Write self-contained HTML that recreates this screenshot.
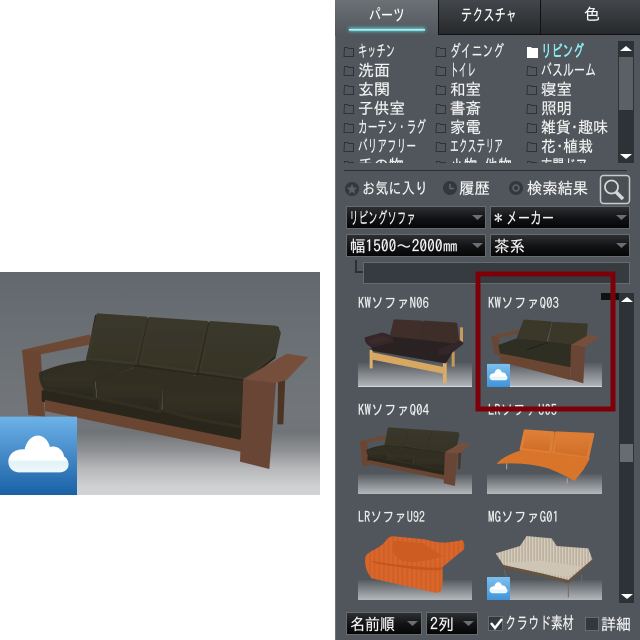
<!DOCTYPE html>
<html><head><meta charset="utf-8"><style>
html,body{margin:0;padding:0;background:#fff;width:640px;height:640px;overflow:hidden}
svg{display:block}
text{font-family:"IPAGothic","Liberation Sans","Noto Sans CJK JP",sans-serif;fill:#f4f4f4;font-size:16px;stroke:#f4f4f4;stroke-width:.15px}
.s{font-size:17px}
.d{fill:#fff;font-size:17px}
.l{font-size:15px;fill:#eee}
</style></head><body>
<svg width="640" height="640" viewBox="0 0 640 640" xmlns="http://www.w3.org/2000/svg">
<defs>
<linearGradient id="bg" x1="0" y1="0" x2="0" y2="1">
<stop offset="0" stop-color="#62686e"/><stop offset=".3" stop-color="#6b7075"/><stop offset=".62" stop-color="#72767a"/><stop offset=".72" stop-color="#717477"/><stop offset=".8" stop-color="#8e9093"/><stop offset=".88" stop-color="#b5b7b9"/><stop offset=".96" stop-color="#cfd0d2"/><stop offset="1" stop-color="#d2d3d5"/>
</linearGradient>
<linearGradient id="sel" x1="0" y1="0" x2="0" y2="1"><stop offset="0" stop-color="#2e3134"/><stop offset=".5" stop-color="#131416"/><stop offset="1" stop-color="#050506"/></linearGradient>
<linearGradient id="tabA" x1="0" y1="0" x2="0" y2="1"><stop offset="0" stop-color="#6c7176"/><stop offset="1" stop-color="#50565b"/></linearGradient>
<linearGradient id="tabB" x1="0" y1="0" x2="0" y2="1"><stop offset="0" stop-color="#43474b"/><stop offset="1" stop-color="#26282b"/></linearGradient>
<linearGradient id="plate" x1="0" y1="0" x2="0" y2="1"><stop offset="0" stop-color="#565b60"/><stop offset="1" stop-color="#b5b8bb"/></linearGradient>
<linearGradient id="badge" x1="0" y1="0" x2="0" y2="1"><stop offset="0" stop-color="#6db2e8"/><stop offset="1" stop-color="#1a60a6"/></linearGradient>
<linearGradient id="badge2" x1="0" y1="0" x2="0" y2="1"><stop offset="0" stop-color="#7cc0ee"/><stop offset="1" stop-color="#3f94dc"/></linearGradient>
<linearGradient id="cloud" x1="0" y1="0" x2="0" y2="1"><stop offset="0" stop-color="#fff"/><stop offset=".65" stop-color="#fff"/><stop offset=".72" stop-color="#dff3f7"/><stop offset="1" stop-color="#f0f9fb"/></linearGradient>
<linearGradient id="seatG" x1="0" y1="0" x2="0" y2="1"><stop offset="0" stop-color="#302e22"/><stop offset=".5" stop-color="#333024"/><stop offset="1" stop-color="#29271c"/></linearGradient>
<linearGradient id="backG" x1="0" y1="0" x2="0" y2="1"><stop offset="0" stop-color="#3a382c"/><stop offset="1" stop-color="#363326"/></linearGradient>
<linearGradient id="orG" x1="0" y1="0" x2="0" y2="1"><stop offset="0" stop-color="#e08036"/><stop offset="1" stop-color="#cf6c28"/></linearGradient>
<pattern id="wick" width="9" height="9" patternUnits="userSpaceOnUse"><rect width="9" height="9" fill="#bdb2a1"/><rect width="4" height="9" fill="#d6ccbc"/></pattern>
<pattern id="rib" width="14" height="14" patternUnits="userSpaceOnUse"><rect width="14" height="14" fill="#d9662c"/><rect width="5" height="14" fill="#cf5e25"/></pattern>
<filter id="glow" x="-30%" y="-300%" width="160%" height="700%"><feGaussianBlur stdDeviation="1.5"/></filter>
<filter id="soft"><feGaussianBlur stdDeviation=".4"/></filter>
<clipPath id="listclip"><rect x="340" y="40" width="278" height="123"/></clipPath>
<path id="cl" d="M55,622C28,620 18,592 30,572C38,558 56,552 74,553C80,526 98,510 116,512C136,514 146,532 150,546C170,540 190,555 192,574C212,586 212,620 180,622Z" fill="url(#cloud)"/>
<path id="fld" d="M.5,.5h3l1,1h5v8h-9.500z" fill="#52575b" stroke="#2f3337"/>
<g id="sofa">
<path d="M835,300L858,290L850,478L832,478Z" fill="#4d3427"/>
<path d="M66,255L270,208L274,238L122,268Z" fill="#6d4934"/>
<path d="M66,255L122,262L135,455L85,450Z" fill="#6a4532"/>
<path d="M285,150L835,185L842,205L826,280L735,350L258,290Z" fill="#2a281d"/>
<g stroke-linejoin="round" stroke-width="8">
<path d="M293,149L439,159L408,296L262,281Z" fill="url(#backG)" stroke="#3a382b"/>
<path d="M449,160L621,172L587,320L420,296Z" fill="url(#backG)" stroke="#3a382b"/>
<path d="M632,172L826,186L838,202L822,270L735,340L600,320Z" fill="url(#backG)" stroke="#3a382b"/>
</g>
<path d="M125,375L125,410L720,530L735,480L300,400Z" fill="#2a281d"/>
<path d="M135,405L725,525L722,560L135,438Z" fill="#694432"/>
<g stroke-linejoin="round" stroke-width="10">
<path d="M122,326Q180,300 260,291L395,305L280,347L285,402L135,372Q122,350 122,326Z" fill="url(#seatG)" stroke="#2f2d21"/>
<path d="M292,352L410,311L578,332L482,370L480,440L296,400Z" fill="url(#seatG)" stroke="#312f22"/>
<path d="M492,374L595,334L725,352L725,486L580,460L492,436Z" fill="url(#seatG)" stroke="#302e21"/>
</g>
<path d="M730,342L860,266L925,276L860,345L825,354Z" fill="#74503b"/>
<path d="M730,342L828,354L808,612L720,590Z" fill="#694534"/>
</g>
</defs>

<!-- left preview -->
<rect x="0" y="272" width="320" height="223" fill="url(#bg)"/>
<g transform="translate(0,265) scale(.33333)" filter="url(#soft)"><use href="#sofa"/>
<rect x="0" y="455" width="231" height="235" fill="url(#badge)"/><use href="#cl"/></g>

<!-- panel -->
<rect x="335" y="0" width="305" height="640" fill="#50565b"/>
<rect x="335" y="0" width="1" height="640" fill="#6d7277"/>
<rect x="438" y="0" width="102" height="35" fill="url(#tabB)"/>
<rect x="540" y="0" width="100" height="35" fill="url(#tabB)"/>
<rect x="438" y="0" width="1" height="35" fill="#111"/><rect x="540" y="0" width="1" height="35" fill="#111"/>
<rect x="438" y="34" width="202" height="1" fill="#101113"/>
<rect x="335" y="0" width="103" height="36" fill="url(#tabA)"/>
<rect x="349" y="28" width="76" height="3" fill="#5fe3ee" filter="url(#glow)"/>
<rect x="349" y="29" width="76" height="1.6" fill="#aef2f6"/>
<text x="369" y="21" class="d" textLength="36" lengthAdjust="spacingAndGlyphs">パーツ</text>
<text x="461" y="21" class="d" textLength="56" lengthAdjust="spacingAndGlyphs">テクスチャ</text>
<text x="584" y="20" class="d" style="font-size:16px">色</text>

<!-- list -->
<g clip-path="url(#listclip)">
<use href="#fld" x="344" y="47"/><use href="#fld" x="344" y="66"/><use href="#fld" x="344" y="85"/><use href="#fld" x="344" y="104"/><use href="#fld" x="344" y="123"/><use href="#fld" x="344" y="142"/><use href="#fld" x="344" y="161"/>
<use href="#fld" x="436" y="47"/><use href="#fld" x="436" y="66"/><use href="#fld" x="436" y="85"/><use href="#fld" x="436" y="104"/><use href="#fld" x="436" y="123"/><use href="#fld" x="436" y="142"/><use href="#fld" x="436" y="161"/>
<use href="#fld" x="527" y="66"/><use href="#fld" x="527" y="85"/><use href="#fld" x="527" y="104"/><use href="#fld" x="527" y="123"/><use href="#fld" x="527" y="142"/><use href="#fld" x="527" y="161"/>
<path d="M527,47h4l1,1h6v10h-11z" fill="#fff"/>
<text x="358" y="57" class="s" textLength="37" lengthAdjust="spacingAndGlyphs">キッチン</text>
<text x="358" y="76" textLength="32" lengthAdjust="spacingAndGlyphs">洗面</text>
<text x="358" y="95" textLength="32" lengthAdjust="spacingAndGlyphs">玄関</text>
<text x="358" y="114" textLength="47" lengthAdjust="spacingAndGlyphs">子供室</text>
<text x="358" y="133" class="s" textLength="68" lengthAdjust="spacingAndGlyphs">カーテン・ラグ</text>
<text x="358" y="152" class="s" textLength="58" lengthAdjust="spacingAndGlyphs">バリアフリー</text>
<text x="358" y="171" textLength="46" lengthAdjust="spacingAndGlyphs">手の物</text>
<text x="450" y="57" class="s" textLength="54" lengthAdjust="spacingAndGlyphs">ダイニング</text>
<text x="450" y="76" class="s" textLength="26" lengthAdjust="spacingAndGlyphs">トイレ</text>
<text x="450" y="95" textLength="31" lengthAdjust="spacingAndGlyphs">和室</text>
<text x="450" y="114" textLength="31" lengthAdjust="spacingAndGlyphs">書斎</text>
<text x="450" y="133" textLength="31" lengthAdjust="spacingAndGlyphs">家電</text>
<text x="450" y="152" class="s" textLength="53" lengthAdjust="spacingAndGlyphs">エクステリア</text>
<text x="450" y="171" textLength="62" lengthAdjust="spacingAndGlyphs">小物･他物</text>
<text x="541" y="57" class="s" style="fill:#8feef5;stroke:#8feef5;stroke-width:.5px" textLength="43" lengthAdjust="spacingAndGlyphs">リビング</text>
<text x="541" y="76" class="s" textLength="55" lengthAdjust="spacingAndGlyphs">バスルーム</text>
<text x="541" y="95" textLength="31" lengthAdjust="spacingAndGlyphs">寝室</text>
<text x="541" y="114" textLength="31" lengthAdjust="spacingAndGlyphs">照明</text>
<text x="541" y="133" textLength="67" lengthAdjust="spacingAndGlyphs">雑貨･趣味</text>
<text x="541" y="152" textLength="52" lengthAdjust="spacingAndGlyphs">花･植栽</text>
<text x="541" y="171" textLength="46" lengthAdjust="spacingAndGlyphs">玄関ドア</text>
</g>
<!-- list scrollbar -->
<rect x="618" y="41" width="16" height="122" fill="#2d3237"/>
<rect x="619" y="57" width="14" height="53" fill="#5b6065"/>
<path d="M620,51L626,46L632,51Z" fill="#fff"/><path d="M620,154L632,154L626,159Z" fill="#fff"/>

<rect x="344" y="170" width="283" height="1" fill="#2b2f33"/>

<!-- filters -->
<circle cx="352" cy="189" r="7" fill="#33383d"/><path d="M352,184l1.5,3.4 3.6,.4-2.7,2.4 .8,3.6-3.2,-1.9-3.2,1.9 .8,-3.6-2.7,-2.4 3.6,-.4z" fill="#5a6065"/>
<circle cx="450" cy="188" r="7" fill="#33383d"/><path d="M450,184v4.500h4" stroke="#60666b" stroke-width="1.500" fill="none"/>
<circle cx="516" cy="188" r="7" fill="#33383d"/><circle cx="516" cy="188" r="3" fill="none" stroke="#60666b" stroke-width="1.500"/>
<text x="362" y="194" textLength="66" lengthAdjust="spacingAndGlyphs">お気に入り</text>
<text x="459" y="194" textLength="31" lengthAdjust="spacingAndGlyphs">履歴</text>
<text x="527" y="194" textLength="61" lengthAdjust="spacingAndGlyphs">検索結果</text>
<rect x="600.500" y="175.500" width="29" height="28" rx="3" fill="#4a4f54" stroke="#c8cbcd" stroke-width="1.500"/>
<circle cx="611.500" cy="187" r="6.500" fill="none" stroke="#d4d6d8" stroke-width="1.800"/>
<path d="M616,192L623,199" stroke="#d4d6d8" stroke-width="3.500"/>

<!-- selects -->
<g stroke="#666b70" stroke-width="1">
<rect x="346.500" y="206.500" width="139" height="22" fill="url(#sel)"/>
<rect x="490.500" y="206.500" width="139" height="22" fill="url(#sel)"/>
<rect x="346.500" y="234.500" width="139" height="22" fill="url(#sel)"/>
<rect x="490.500" y="234.500" width="139" height="22" fill="url(#sel)"/>
<rect x="346.500" y="612.500" width="75" height="22" fill="url(#sel)"/>
<rect x="426.500" y="612.500" width="51" height="22" fill="url(#sel)"/>
</g>
<g fill="#6a6f74">
<path d="M472,215h11l-5.500,5z"/><path d="M616,215h11l-5.500,5z"/><path d="M472,243h11l-5.500,5z"/><path d="M616,243h11l-5.500,5z"/><path d="M407,621h11l-5.500,5z"/><path d="M463,621h11l-5.500,5z"/>
</g>
<text x="349" y="224" class="s" textLength="67" lengthAdjust="spacingAndGlyphs">リビングソファ</text>
<text x="494" y="224" class="s">*</text>
<text x="506" y="224" class="s" textLength="48" lengthAdjust="spacingAndGlyphs">メーカー</text>
<text x="350" y="252" textLength="108" lengthAdjust="spacingAndGlyphs">幅1500～2000㎜</text>
<text x="494" y="252" textLength="31" lengthAdjust="spacingAndGlyphs">茶系</text>
<text x="350" y="630" textLength="45" lengthAdjust="spacingAndGlyphs">名前順</text>
<text x="430" y="630" textLength="24" lengthAdjust="spacingAndGlyphs">2列</text>

<path d="M356,260V272H363" stroke="#2c3034" stroke-width="2" fill="none"/>
<rect x="363.500" y="262.500" width="266" height="21" fill="#363b40" stroke="#666b70"/>

<!-- plates -->
<rect x="358" y="363" width="114" height="24" fill="url(#plate)"/><rect x="358" y="386" width="114" height="1" fill="#d6d8da"/>
<rect x="487" y="363" width="115" height="24" fill="url(#plate)"/><rect x="487" y="386" width="115" height="1" fill="#d6d8da"/>
<rect x="358" y="474" width="114" height="20" fill="url(#plate)"/>
<rect x="487" y="474" width="115" height="20" fill="url(#plate)"/>
<rect x="358" y="580" width="114" height="20" fill="url(#plate)"/>
<rect x="487" y="580" width="115" height="20" fill="url(#plate)"/>

<!-- N06 -->
<g transform="translate(335,270) scale(.33333)" filter="url(#soft)">
<path d="M350,245h9v45h-9z M375,172h9v50h-9z" fill="#c9995a"/>
<path d="M104,240h9v55h-9z M324,270h11v70h-11z" fill="#dcae6e"/>
<path d="M108,268L330,312V292L108,246Z" fill="#d8a864"/>
<g stroke-linejoin="round" stroke-width="10">
<path d="M180,153L258,157L252,205L170,196Z" fill="#3f2f2b" stroke="#3f2f2b"/>
<path d="M268,157L362,163L368,215L290,226L258,205Z" fill="#3c2d29" stroke="#3c2d29"/>
<path d="M112,228L170,205L255,214L360,226L345,250L330,275L115,238Z" fill="#2a2120" stroke="#2c2322"/>
<path d="M94,206L140,193Q172,198 170,214L112,227Q96,222 94,206Z" fill="#3c2c2a" stroke="#35282a"/>
<path d="M314,243L374,216L380,220L345,246L316,250Z" fill="#33262a" stroke="#33262a"/>
</g>
</g>
<!-- Q03 -->
<g transform="translate(335,270) scale(.33333)" filter="url(#soft)">
<path d="M468,198L552,178L553,188L490,205Z" fill="#6d4934"/>
<path d="M468,198L490,203L497,258L478,250Z" fill="#694534"/>
<g stroke-linejoin="round" stroke-width="5">
<path d="M568,151L648,157L633,212L548,203Z" fill="#3a3729" stroke="#3a3729"/>
<path d="M654,158L756,163L750,224L642,214Z" fill="#3b3829" stroke="#3b3829"/>
</g>
<path d="M495,245L705,290L705,330L497,275Z" fill="#694432"/>
<path d="M490,225L545,205L640,215L752,228L708,292L495,250Z" fill="#2f2d20"/>
<path d="M575,240L640,217" stroke="#232218" stroke-width="3"/>
<path d="M708,225L760,195L795,198L750,232Z" fill="#74503b"/>
<path d="M708,225L750,232L745,340L705,328Z" fill="#694534"/>
</g>
<!-- Q04 -->
<g transform="translate(351.500,409.100) scale(.128,.1257)" filter="url(#soft)"><use href="#sofa"/></g>
<!-- U05 -->
<g transform="translate(335,400) scale(.33333)" filter="url(#soft)">
<path d="M515,190V208M697,235V250" stroke="#aaa" stroke-width="3"/>
<g stroke-linejoin="round" stroke-width="8">
<path d="M570,92L655,98L646,158L558,148Z" fill="url(#orG)" stroke="#df7f35"/>
<path d="M664,98L774,103L758,174L654,160Z" fill="url(#orG)" stroke="#dd7c33"/>
</g>
<path d="M485,192Q500,170 560,150L650,160L765,175L745,210L718,243Q690,225 640,205Q570,185 485,192Z" fill="#d9742c"/>
</g>
<!-- U92: coordinates from crop at (355,520) -->
<g transform="translate(355,520) scale(.33333)" filter="url(#soft)">
<path d="M30,115Q32,100 60,88Q85,75 95,58Q105,47 118,49L210,58Q245,68 270,68Q300,65 322,60Q330,68 327,88Q300,110 262,142Q265,175 260,208Q255,220 240,218L50,175Q28,150 30,115Z" fill="url(#rib)"/>
<path d="M110,85Q120,115 150,125Q200,130 265,108Q240,95 205,70L120,62Z" fill="#cd5c24"/>
<path d="M45,122Q120,135 190,140Q235,145 262,142L258,150Q200,155 60,130Z" fill="#c4561f"/>
</g>
<!-- G01 -->
<g transform="translate(355,520) scale(.33333)" filter="url(#soft)">
<path d="M448,150L455,175M640,185V232M680,165V190" stroke="#6b6b68" stroke-width="3"/>
<path d="M422,100L495,78L515,48L590,55L605,78L700,85L712,118L640,180L560,160L445,135Z" fill="url(#wick)"/>
<path d="M450,128L560,122L680,140L640,172L470,140Z" fill="#cfc5b5"/>
<path d="M445,135L640,182L712,118L708,128L640,190L560,170L445,143Z" fill="#6b5338"/>
</g>

<!-- labels -->
<text x="358" y="308" class="l" textLength="71" lengthAdjust="spacingAndGlyphs">KWソファN06</text>
<text x="488" y="308" class="l" textLength="71" lengthAdjust="spacingAndGlyphs">KWソファQ03</text>
<text x="358" y="415" class="l" textLength="71" lengthAdjust="spacingAndGlyphs">KWソファQ04</text>
<text x="488" y="415" class="l" textLength="69" lengthAdjust="spacingAndGlyphs">LRソファU05</text>
<text x="358" y="522" class="l" textLength="67" lengthAdjust="spacingAndGlyphs">LRソファU92</text>
<text x="488" y="522" class="l" textLength="71" lengthAdjust="spacingAndGlyphs">MGソファG01</text>

<!-- cloud badges -->
<rect x="487" y="364" width="23" height="23" fill="url(#badge2)"/>
<g transform="translate(487,318) scale(.1,.1)"><use href="#cl"/></g>
<rect x="487" y="577" width="23" height="23" fill="url(#badge2)"/>
<g transform="translate(487,531) scale(.1,.1)"><use href="#cl"/></g>

<!-- scrollbar -->
<rect x="619" y="293" width="15" height="310" fill="#2d3237"/>
<rect x="620" y="444" width="13" height="18" fill="#666c71"/>
<path d="M621,302L627,297L633,302Z" fill="#fff"/>
<path d="M621,594L633,594L627,599Z" fill="#fff"/>
<rect x="601" y="293" width="18" height="7" fill="#101113"/>

<!-- red box -->
<rect x="478" y="274" width="135" height="135" fill="none" stroke="#7d0008" stroke-width="5"/>

<!-- checks -->
<rect x="488.500" y="616.500" width="14" height="14" fill="#33383d" stroke="#666b70"/>
<path d="M491,623L495,628L502,619" stroke="#fff" stroke-width="2.500" fill="none"/>
<text x="505" y="629" class="s" textLength="69" lengthAdjust="spacingAndGlyphs">クラウド素材</text>
<rect x="585.500" y="617.500" width="13" height="13" fill="#33383d" stroke="#666b70"/>
<text x="601" y="630" textLength="30" lengthAdjust="spacingAndGlyphs">詳細</text>
</svg>
</body></html>
